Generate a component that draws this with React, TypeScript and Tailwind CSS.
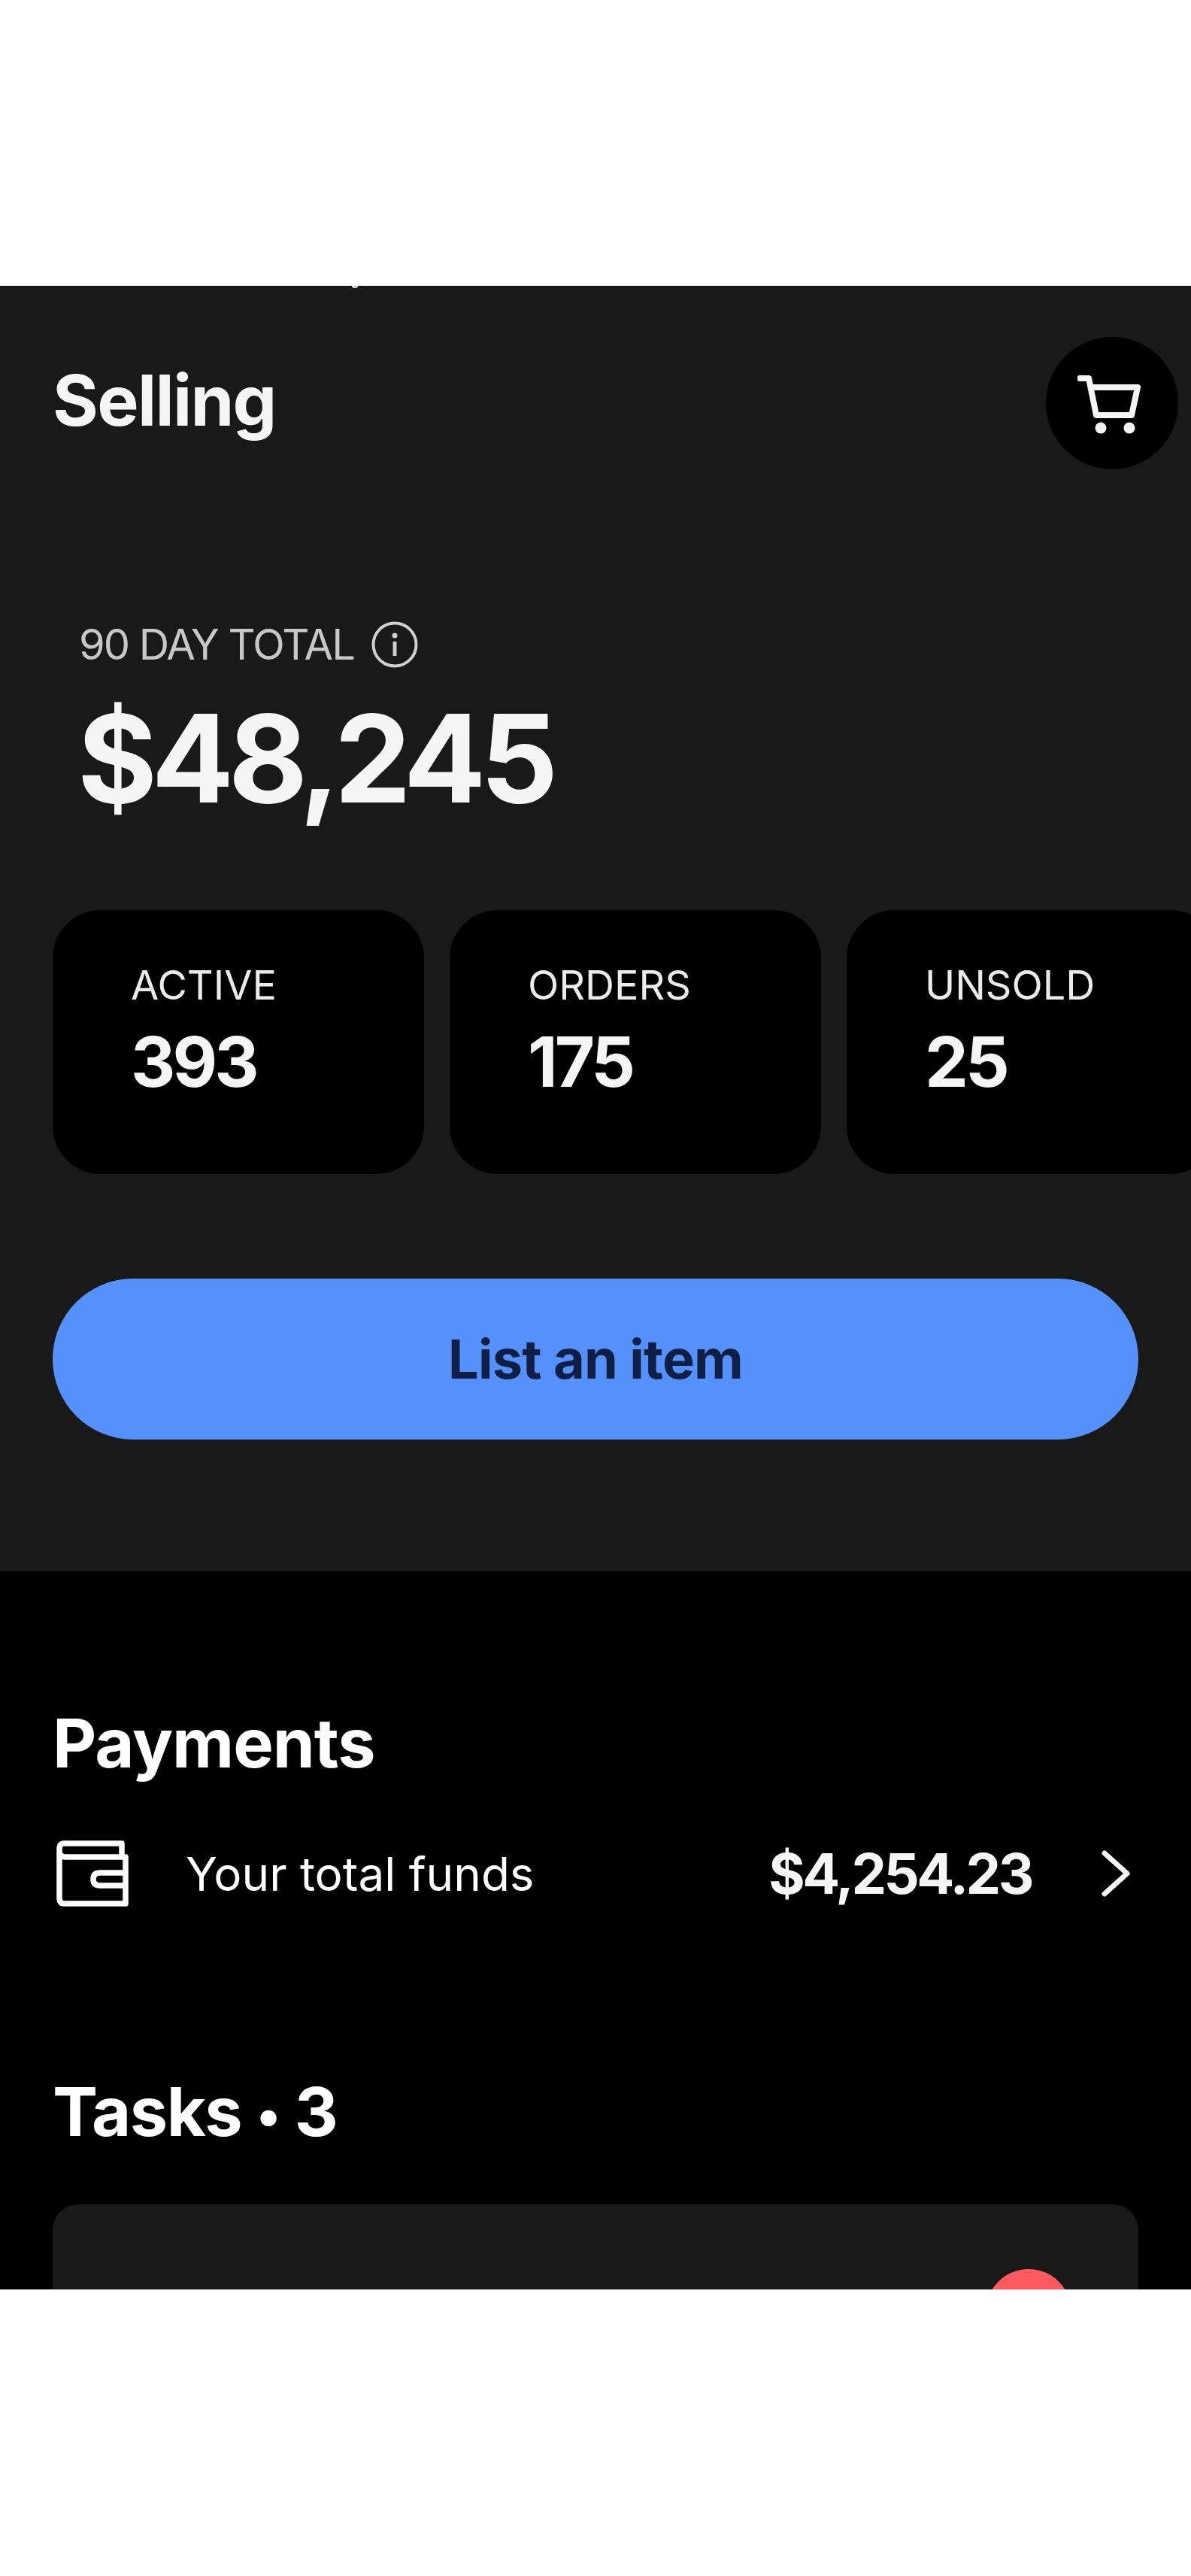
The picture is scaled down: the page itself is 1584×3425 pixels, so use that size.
const font = { fontFamily: "Inter, sans-serif" };

const stats = [
  { label: "ACTIVE", value: "393" },
  { label: "ORDERS", value: "175" },
  { label: "UNSOLD", value: "25" },
];

function CartIcon() {
  return (
    <svg width="92" height="86" viewBox="0 0 92 86" fill="none" stroke="#f5f5f5" strokeWidth="8" strokeLinecap="round" strokeLinejoin="round">
      <path d="M3 10H15L25 59H72L80 22H19" />
      <circle cx="31" cy="76" r="7.5" fill="#f5f5f5" stroke="none" />
      <circle cx="69" cy="76" r="7.5" fill="#f5f5f5" stroke="none" />
    </svg>
  );
}

function InfoIcon() {
  return (
    <svg width="62" height="62" viewBox="0 0 62 62" fill="none">
      <circle cx="31" cy="31" r="28.5" stroke="#d0d0d0" strokeWidth="4" />
      <circle cx="31" cy="19" r="3.5" fill="#d0d0d0" />
      <rect x="28.5" y="27" width="5" height="19" fill="#d0d0d0" />
    </svg>
  );
}

function WalletIcon() {
  return (
    <svg width="96" height="88" viewBox="0 0 96 88" fill="none" stroke="#ffffff" strokeWidth="7.5" strokeLinejoin="round">
      <path d="M87 22V4H10Q4 4 4 12V76Q4 84 10 84H92V22H12Q4 22 4 14" />
      <path d="M92 43H58Q49 43 49 51.5Q49 60 58 60H92" />
    </svg>
  );
}

function ChevronIcon() {
  return (
    <svg width="40" height="62" viewBox="0 0 40 62" fill="none" stroke="#f5f5f5" strokeWidth="7" strokeLinecap="round" strokeLinejoin="round">
      <path d="M5 4L35 31L5 58" />
    </svg>
  );
}

export default function App() {
  return (
    <div className="h-[3425px] bg-white pt-[380px]" style={font}>
      <main className="h-[2664px] overflow-hidden bg-black text-white">
        <section className="relative h-[1709px] bg-[#191919]">
          {/* clipped glyph tip from the content scrolled above */}
          <span className="absolute left-[468px] top-0 h-[3px] w-[8px] rounded-b-full bg-[#d8d8d8]" />

          <div className="flex items-start justify-between pl-[70px] pr-[17px] pt-[68px]">
            <h1 className="mt-[24px] text-[93px] leading-[120px] font-bold tracking-[-1.7px] text-[#f5f5f5]">Selling</h1>
            <div className="flex h-[176px] w-[176px] items-center justify-center rounded-full bg-black">
              <CartIcon />
            </div>
          </div>

          <div className="mt-[201px] flex h-[64px] items-center gap-[23px] pl-[105px]">
            <span className="text-[56px] leading-[64px] tracking-[-2px] text-[#c8c8c8]">90 DAY TOTAL</span>
            <InfoIcon />
          </div>
          <div className="mt-[34px] pl-[103px] text-[162px] leading-[170px] font-bold tracking-[-7.5px] text-[#f5f5f5]">$48,245</div>

          <div className="mt-[117px] flex gap-[34px] overflow-hidden pl-[70px]">
            {stats.map((s) => (
              <div key={s.label} className="h-[351px] w-[494px] shrink-0 rounded-[64px] bg-black pl-[104px] pt-[70px]">
                <div className="text-[54px] leading-[60px] tracking-[0px] text-[#ebebeb]">{s.label}</div>
                <div className="mt-[24px] text-[92px] leading-[96px] font-bold tracking-[-4px] text-[#f5f5f5]">{s.value}</div>
              </div>
            ))}
          </div>

          <div className="mx-[70px] mt-[139px] flex h-[214px] items-center justify-center rounded-full bg-[#5591fa] text-[72px] font-bold tracking-[-0.8px] text-[#0f1e45]">
            List an item
          </div>
        </section>

        <section className="px-[70px] pt-[179px]">
          <h2 className="h-[100px] text-[90px] leading-[100px] font-bold tracking-[-1px]">Payments</h2>
          <div className="mt-[73px] flex h-[100px] items-center pl-[5px]">
            <WalletIcon />
            <span className="ml-[76px] text-[62px] font-normal">Your total funds</span>
            <span className="ml-auto text-[74px] font-bold tracking-[-3.5px] text-[#f5f5f5]">$4,254.23</span>
            <div className="ml-[92px] mr-[10px]">
              <ChevronIcon />
            </div>
          </div>

          <h2 className="mt-[217px] h-[100px] text-[90px] leading-[100px] font-bold tracking-[-1.5px]">
            Tasks <span className="align-[4px] text-[68px]">•</span> 3
          </h2>
          <div className="mt-[73px] flex h-[300px] justify-end rounded-[34px] bg-[#191919] pr-[89px] pt-[86px]">
            <div className="h-[114px] w-[114px] rounded-full bg-[#ff5a5f]" />
          </div>
        </section>
      </main>
    </div>
  );
}
